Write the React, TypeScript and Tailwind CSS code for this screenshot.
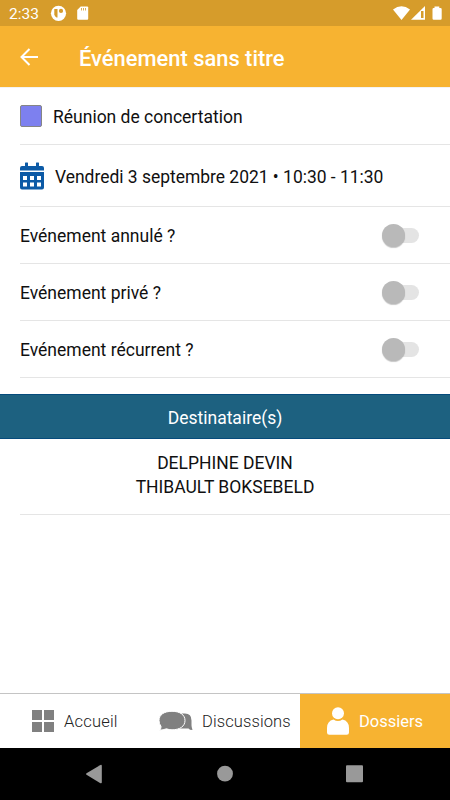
import React from "react";

function Toggle() {
  return (
    <div className="mr-[31px] flex h-[15px] w-[36px] items-center rounded-full bg-[#e4e4e4]">
      <span className="-ml-px h-[23px] w-[23px] shrink-0 rounded-full bg-[#b9b9b9] shadow-[0_1px_1px_rgba(0,0,0,0.22)]" />
    </div>
  );
}

function SwitchRow({ label }: { label: string }) {
  return (
    <div className="ml-5 flex h-[57px] items-center justify-between border-b border-[#e5e5e5]">
      <span className="pt-[2px] text-[17.5px]">{label}</span>
      <Toggle />
    </div>
  );
}

function StatusBar() {
  return (
    <div className="flex h-[26px] items-center bg-[#d69c2b] pl-[9px] text-white">
      <span className="w-[41px] pt-px text-[15.5px] leading-[26px]">2:33</span>
      <svg width="42" height="26" viewBox="50 0 42 26">
        <circle cx="58.5" cy="13.3" r="7.6" fill="white" />
        <path d="M54.300 9h3.200v8.500h-1a4.500 4.500 0 0 1-2.200-3Z" fill="#d69c2b" />
        <circle cx="61" cy="10.900" r="2.100" fill="#d69c2b" />
        <path d="M80.7 6.500h6.500q1 0 1 1v11.300q0 1-1 1h-9q-1 0-1-1V10Z" fill="white" />
        <path d="M81.500 8v2.500M83.500 8v2.500M85.500 8v2.500" stroke="#d69c2b" strokeWidth=".8" />
      </svg>
      <svg className="ml-auto" width="60" height="26" viewBox="390 0 60 26">
        <path d="M393 9.500Q401.500 3 410 9.500L401.500 20Z" fill="white" />
        <path d="M425 6v13.700h-14Z" fill="white" />
        <path d="M421 11h2.500v7H421Z" fill="#d69c2b" />
        <path d="M434.500 8V6.400h4.800V8h1.200q1.200 0 1.200 1.200v9.300q0 1.200-1.200 1.200h-6.800q-1.200 0-1.200-1.200V9.200q0-1.200 1.200-1.200Z" fill="white" />
      </svg>
    </div>
  );
}

function CalendarIcon() {
  return (
    <svg width="24" height="28" viewBox="0 0 24 28" fill="#0c5aa6">
      <path d="M2 4h3V1.500Q5 .5 5.500.5h2q.5 0 .5.5V4h8V1q0-.5.500-.5h2q.5 0 .5.5V4h3q2 0 2 2v2.500H0V6q0-2 2-2Z" />
      <path fillRule="evenodd" d="M0 10h24V25.500q0 2-2 2H2q-2 0-2-2ZM3 14v4h4v-4ZM10 14v4h4v-4ZM17 14v4h4v-4ZM3 20.500v4h4v-4ZM10 20.500v4h4v-4ZM17 20.500v4h4v-4Z" />
    </svg>
  );
}

export default function App() {
  return (
    <div className="flex h-[800px] w-[450px] flex-col overflow-hidden bg-white font-['Roboto',sans-serif] text-[#101010]">
      <StatusBar />
      <header className="flex h-[61px] items-center bg-[#f7b331] pt-[2px] text-white">
        <svg className="-mt-[2px] ml-5" width="18" height="18" viewBox="0 0 18 18" fill="none" stroke="white" strokeWidth="2">
          <path d="M9.500 1 1.500 9l8 8M1.500 9H18" />
        </svg>
        <h1 className="ml-[41px] pt-[3px] text-[21.9px] font-medium">Événement sans titre</h1>
      </header>

      <main className="flex-1">
        <div className="h-px bg-[#f3f3f3]" />
        <div className="ml-5 flex h-[57px] items-center border-b border-[#e5e5e5]">
          <span className="h-[22px] w-[22px] rounded-[2px] border border-[#858585] bg-[#7d80ef]" />
          <span className="ml-[11px] pt-[2px] text-[17.5px]">Réunion de concertation</span>
        </div>
        <div className="ml-5 flex h-[62px] items-center border-b border-[#e5e5e5]">
          <CalendarIcon />
          <span className="ml-[11px] pt-[3px] text-[17.45px]">Vendredi 3 septembre 2021 • 10:30 - 11:30</span>
        </div>
        <SwitchRow label="Evénement annulé ?" />
        <SwitchRow label="Evénement privé ?" />
        <SwitchRow label="Evénement récurrent ?" />
        <div className="mt-4 flex h-[45px] items-center justify-center border-y border-[#064b7c] bg-[#1d6180] pt-[3px] text-[17.5px] text-white">
          Destinataire(s)
        </div>
        <div className="ml-5 h-[76px] border-b border-[#e5e5e5] pr-5 pt-3 text-center text-[17.5px] leading-6">
          <p>DELPHINE DEVIN</p>
          <p>THIBAULT BOKSEBELD</p>
        </div>
      </main>

      <nav className="flex h-[55px] border-t border-[#c4c4c4] text-[16.5px] font-light text-[#222222]">
        <div className="flex w-[150px] items-center pl-8">
          <div className="grid grid-cols-[10px_10px] gap-[2px]">
            <i className="h-[10px] bg-[#808080]" />
            <i className="h-[10px] bg-[#808080]" />
            <i className="h-[10px] bg-[#808080]" />
            <i className="h-[10px] bg-[#808080]" />
          </div>
          <span className="ml-[10px] pt-[2px] tracking-[0.2px]">Accueil</span>
        </div>
        <div className="flex w-[150px] items-center pl-[9px]">
          <svg width="34" height="20" viewBox="0 0 34 20" fill="#808080">
            <path d="M23 2.500h3q6.500 0 6.500 7v4.800q0 2 1 4.700-3 0-4-1.500H20Z" />
            <path d="M13 .3c8 0 13 3.500 13 9.200s-5 9.300-13 9.300q-3 0-5.500-1Q4 19 .8 19.200 2.300 17 2 15.300 0 13 0 9.500C0 3.800 5 .3 13 .3Z" stroke="white" strokeWidth="1" />
          </svg>
          <span className="ml-[9px] pt-[2px] tracking-[0.1px]">Discussions</span>
        </div>
        <div className="flex w-[150px] items-center bg-[#f7b331] pl-[27px] font-normal text-white">
          <svg width="22" height="28" viewBox="0 0 22 28" fill="white">
            <circle cx="11" cy="6.300" r="6" />
            <path d="M6.500 12.500Q11 15.500 15.500 12.500 22 14 22 21v4.500q0 2.300-2.300 2.300H2.300Q0 27.800 0 25.500V21q0-7 6.500-8.500Z" />
          </svg>
          <span className="ml-[10px] pt-[2px]">Dossiers</span>
        </div>
      </nav>
      <div className="flex h-[52px] items-center justify-around bg-black">
        <svg width="450" height="52" viewBox="0 0 450 52" fill="#999999">
          <path d="M86.500 25.300q-1 .7 0 1.400l13.500 8.300q1.800 1 1.800-.8V18q0-1.800-1.800-.8Z" />
          <circle cx="225" cy="25.700" r="7.900" />
          <rect x="346" y="17.300" width="17" height="17" rx="1" />
        </svg>
      </div>
    </div>
  );
}
